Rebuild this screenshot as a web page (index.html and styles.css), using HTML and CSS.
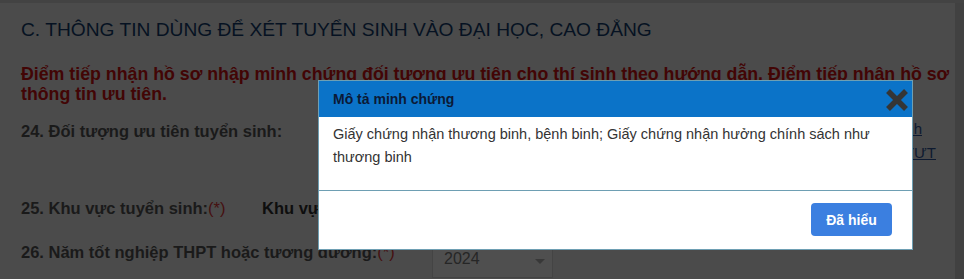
FILE: index.html
```html
<!DOCTYPE html>
<html lang="vi">
<head>
<meta charset="utf-8">
<title>Thông tin xét tuyển</title>
<link rel="stylesheet" href="styles.css">
</head>
<body>
<div class="screen">
  <main class="page">
    <h2 class="section-title">C. THÔNG TIN DÙNG ĐỂ XÉT TUYỂN SINH VÀO ĐẠI HỌC, CAO ĐẲNG</h2>
    <p class="notice">Điểm tiếp nhận hồ sơ nhập minh chứng đối tượng ưu tiên cho thí sinh theo hướng dẫn. Điểm tiếp nhận hồ sơ<br>thông tin ưu tiên.</p>
    <div class="row row-24">
      <span class="label">24. Đối tượng ưu tiên tuyển sinh:</span>
      <div class="links">
        <a class="link link-1" href="#">minh</a>
        <a class="link" href="#">ĐTƯT</a>
      </div>
    </div>
    <div class="row row-25">
      <span class="label label-25">25. Khu vực tuyển sinh:<span class="req">(*)</span></span>
      <span class="value">Khu vực 2 - nông thôn</span>
    </div>
    <div class="row row-26">
      <span class="label label-26">26. Năm tốt nghiệp THPT hoặc tương đương:<span class="req">(*)</span></span>
      <div class="select"><span>2024</span><span class="caret"></span></div>
    </div>
  </main>
  <div class="scroll-strip"></div>

  <div class="modal" role="dialog">
    <div class="modal-header">
      <span class="modal-title">Mô tả minh chứng</span>
      <span class="modal-close" aria-label="Đóng">
        <svg width="26" height="24" viewBox="0 0 26 24"><path d="M4 3 L22 21 M22 3 L4 21" stroke="#353535" stroke-width="5.5" stroke-linecap="butt" fill="none"/></svg>
      </span>
    </div>
    <div class="modal-body">Giấy chứng nhận thương binh, bệnh binh; Giấy chứng nhận hưởng chính sách như thương binh</div>
    <div class="modal-footer">
      <button class="btn-ok">Đã hiểu</button>
    </div>
  </div>
</div>
</body>
</html>
```

FILE: styles.css
```css
* { box-sizing: border-box; }
html, body { margin: 0; padding: 0; }
body {
  width: 964px;
  height: 279px;
  overflow: hidden;
  font-family: "Liberation Sans", Arial, sans-serif;
  background: #4b4b4b;
}
.screen {
  position: relative;
  display: flex;
  width: 964px;
  height: 279px;
  border-top: 3px solid #434343;
}
.page {
  flex: 1;
  padding: 15px 0 0 21px;
  background: #4b4b4b;
}
.scroll-strip {
  width: 9px;
  background: #414141;
}
.section-title {
  margin: 0;
  font-size: 19.2px;
  line-height: 24px;
  font-weight: normal;
  color: #061222;
  white-space: nowrap;
}
.notice {
  margin: 22px 0 0;
  font-size: 17.75px;
  line-height: 20px;
  font-weight: bold;
  color: #420505;
  white-space: nowrap;
}
.row {
  display: flex;
  align-items: flex-start;
  font-size: 16.5px;
  line-height: 20px;
  font-weight: bold;
  color: #1a1a1a;
}
.row-24 { margin-top: 17px; height: 58px; }
.row-25 { margin-top: 19px; }
.row-26 { margin-top: 24px; }
.label { white-space: nowrap; }
.label-25 { width: 241px; }
.label-26 { width: 411px; }
.req { color: #461010; font-weight: normal; }
.value { color: #0e0e0e; white-space: nowrap; }
.links {
  margin-left: auto;
  margin-right: 19px;
  margin-top: -4px;
  display: flex;
  flex-direction: column;
  align-items: flex-end;
  font-size: 15px;
  line-height: 24px;
  font-weight: normal;
}
.link { color: #0e1a30; text-decoration: underline; white-space: nowrap; }
.link-1 { margin-right: 14px; }
.select {
  margin-top: 2px;
  width: 121px;
  height: 34px;
  padding: 4px 0 0 11px;
  display: flex;
  align-items: flex-start;
  justify-content: space-between;
  background: #4f4f4f;
  border: 1px solid #444;
  font-weight: normal;
  font-size: 16px;
  color: #262626;
}
.caret {
  margin: 10px 7px 0 0;
  width: 0; height: 0;
  border-left: 5px solid transparent;
  border-right: 5px solid transparent;
  border-top: 5px solid #383838;
}
.modal {
  position: absolute;
  left: 318px;
  top: 77px;
  width: 595px;
  background: #fff;
  border: 1px solid #6e9fb3;
}
.modal-header {
  height: 36px;
  display: flex;
  align-items: center;
  justify-content: space-between;
  padding: 0 2px 0 14px;
  background: #0b73c8;
}
.modal-title {
  font-size: 14px;
  font-weight: bold;
  color: #0b1a36;
}
.modal-close { display: flex; margin-top: 1px; }
.modal-body {
  padding: 6px 40px 9px 14px;
  font-size: 14.5px;
  line-height: 23px;
  color: #333;
  height: 73px;
}
.modal-footer {
  border-top: 1px solid #6e9fb3;
  display: flex;
  justify-content: flex-end;
  padding: 12px 20px 13px 0;
}
.btn-ok {
  width: 81px;
  height: 33px;
  border: none;
  border-radius: 4px;
  background: #3b7fe0;
  color: #fff;
  font-family: "Liberation Sans", Arial, sans-serif;
  font-size: 14px;
  font-weight: bold;
}
```
